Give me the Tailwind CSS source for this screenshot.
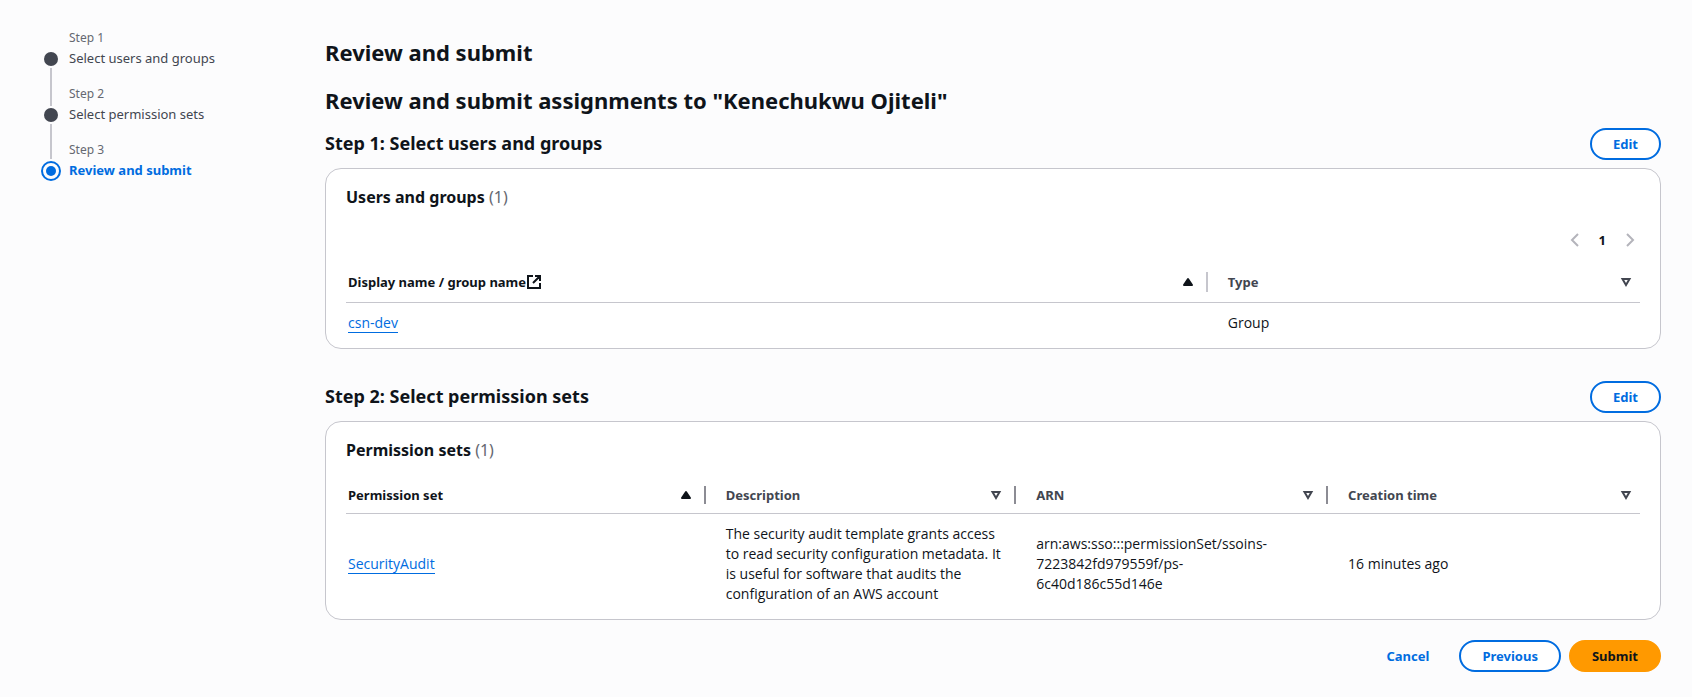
<!DOCTYPE html>
<html lang="en">
<head>
<meta charset="utf-8">
<meta name="viewport" content="width=device-width, initial-scale=1">
<title>Review and submit</title>
<script src="https://cdn.jsdelivr.net/npm/@tailwindcss/browser@4"></script>
</head>
<body class="min-h-screen bg-[#fcfcfd] font-['Noto_Sans',sans-serif] text-[13px] leading-5 text-[#0f141a]">
<svg class="hidden" aria-hidden="true">
  <symbol id="sort-asc" viewBox="0 0 16 16"><path d="M8 5l4 6H4z" fill="currentColor" stroke="currentColor" stroke-width="2" stroke-linejoin="round"/></symbol>
  <symbol id="sort-none" viewBox="0 0 16 16"><path d="M4.5 5h7L8 11z" fill="none" stroke="currentColor" stroke-width="2"/></symbol>
</svg>
<div class="flex pt-7 pr-[31px] pl-10">
  <nav aria-label="Steps" class="w-[285px] shrink-0">
    <ol>
      <li class="flex h-14 gap-2">
        <div class="flex w-[21px] flex-col items-center pt-6"><span class="size-3.5 shrink-0 rounded-full bg-[#424650]"></span><span class="mt-0.5 h-[38px] w-0.5 shrink-0 bg-[#c6c6cd]"></span></div>
        <div><p class="text-[12px] text-[#656871]">Step 1</p><a href="#" class="block text-[#424650]">Select users and groups</a></div>
      </li>
      <li class="flex h-14 gap-2">
        <div class="flex w-[21px] flex-col items-center pt-6"><span class="size-3.5 shrink-0 rounded-full bg-[#424650]"></span><span class="mt-0.5 h-[35px] w-0.5 shrink-0 bg-[#c6c6cd]"></span></div>
        <div><p class="text-[12px] text-[#656871]">Step 2</p><a href="#" class="block text-[#424650]">Select permission sets</a></div>
      </li>
      <li class="flex h-14 gap-2">
        <div class="flex w-[21px] flex-col items-center pt-[21px]"><span class="flex size-5 shrink-0 items-center justify-center rounded-full border-2 border-[#006ce0]"><span class="size-2.5 rounded-full bg-[#006ce0]"></span></span></div>
        <div><p class="text-[12px] text-[#656871]">Step 3</p><a href="#" aria-current="step" class="block font-bold text-[#006ce0]">Review and submit</a></div>
      </li>
    </ol>
  </nav>
  <main class="min-w-0 flex-1 pt-2">
    <h1 class="text-[22px] leading-8 font-bold">Review and submit</h1>
    <h2 class="mt-4 text-[22px] leading-8 font-bold">Review and submit assignments to "Kenechukwu Ojiteli"</h2>
    <section class="mt-3">
      <div class="flex items-start justify-between"><h3 class="text-[18px] leading-[30px] font-bold">Step 1: Select users and groups</h3>
        <button class="h-8 rounded-full border-2 border-[#006ce0] bg-white px-[21px] font-bold text-[#006ce0]">Edit</button></div>
      <div class="mt-2 rounded-2xl border border-[#c6c6cd] bg-white px-5 pt-4 pb-[5px]">
        <h4 class="text-[16px] leading-6 font-bold">Users and groups <span class="font-normal text-[#656871]">(1)</span></h4>
        <div class="mt-[19px] flex h-6 items-center justify-end gap-4 pr-0.5">
          <button aria-label="Previous page" disabled class="text-[#b4b4bb]"><svg class="size-4" viewBox="0 0 16 16" fill="none" stroke="currentColor" stroke-width="2"><path d="M11 2L5 8l6 6"/></svg></button>
          <button aria-current="page" class="font-bold">1</button>
          <button aria-label="Next page" disabled class="text-[#b4b4bb]"><svg class="size-4" viewBox="0 0 16 16" fill="none" stroke="currentColor" stroke-width="2"><path d="M5 2l6 6-6 6"/></svg></button>
        </div>
        <table class="mt-2.5 w-full table-fixed border-collapse text-left">
          <colgroup><col class="w-[66.6%]"><col></colgroup>
          <thead><tr class="h-10 border-b border-[#c6c6cd]">
            <th class="pl-0.5 font-bold"><div class="flex items-center"><span>Display name / group name</span><svg class="size-4" viewBox="0 0 16 16" fill="none" stroke="currentColor" stroke-width="2"><path d="M7 2H2v12h12V9M9 2h5v5M7 9l7-7"/></svg><svg class="mr-2.5 ml-auto size-4"><use href="#sort-asc"/></svg><span class="h-5 w-0.5 bg-[#c6c6cd]"></span></div></th>
            <th class="pl-5 font-bold text-[#424650]"><div class="flex items-center justify-between pr-1.5"><span>Type</span><svg class="size-4"><use href="#sort-none"/></svg></div></th>
          </tr></thead>
          <tbody class="font-['Open_Sans',sans-serif] text-[14px] leading-5"><tr class="h-[41px]"><td class="pl-0.5"><a href="#" class="border-b border-[#006ce0] text-[#006ce0]">csn-dev</a></td><td class="pl-5">Group</td></tr></tbody>
        </table>
      </div>
    </section>
    <section class="mt-8">
      <div class="flex items-start justify-between"><h3 class="text-[18px] leading-[30px] font-bold">Step 2: Select permission sets</h3>
        <button class="h-8 rounded-full border-2 border-[#006ce0] bg-white px-[21px] font-bold text-[#006ce0]">Edit</button></div>
      <div class="mt-2 rounded-2xl border border-[#c6c6cd] bg-white px-5 pt-4 pb-[5px]">
        <h4 class="text-[16px] leading-6 font-bold">Permission sets <span class="font-normal text-[#656871]">(1)</span></h4>
        <table class="mt-4 w-full table-fixed border-collapse text-left">
          <colgroup><col class="w-[27.8%]"><col class="w-[24%]"><col class="w-[24.1%]"><col></colgroup>
          <thead><tr class="h-[35px] border-b border-[#c6c6cd]">
            <th class="pl-0.5 font-bold"><div class="flex items-center"><span>Permission set</span><svg class="mr-2.5 ml-auto size-4"><use href="#sort-asc"/></svg><span class="h-[18px] w-0.5 bg-[#8c8c94]"></span></div></th>
            <th class="pl-5 font-bold text-[#424650]"><div class="flex items-center"><span>Description</span><svg class="mr-2.5 ml-auto size-4"><use href="#sort-none"/></svg><span class="h-[18px] w-0.5 bg-[#8c8c94]"></span></div></th>
            <th class="pl-5 font-bold text-[#424650]"><div class="flex items-center"><span>ARN</span><svg class="mr-2.5 ml-auto size-4"><use href="#sort-none"/></svg><span class="h-[18px] w-0.5 bg-[#8c8c94]"></span></div></th>
            <th class="pl-5 font-bold text-[#424650]"><div class="flex items-center justify-between pr-1.5"><span>Creation time</span><svg class="size-4"><use href="#sort-none"/></svg></div></th>
          </tr></thead>
          <tbody class="font-['Open_Sans',sans-serif] text-[14px] leading-5"><tr><td class="pl-0.5"><a href="#" class="border-b border-[#006ce0] text-[#006ce0]">SecurityAudit</a></td>
            <td class="py-2.5 pr-3 pl-5">The security audit template grants access to read security configuration metadata. It is useful for software that audits the configuration of an AWS account</td>
            <td class="py-2.5 pr-5 pl-5">arn:aws:sso:::permissionSet/ssoins-7223842fd979559f/ps-6c40d186c55d146e</td>
            <td class="pl-5">16 minutes ago</td></tr></tbody>
        </table>
      </div>
    </section>
    <div class="mt-5 flex items-center justify-end gap-2 font-bold text-[#006ce0]">
      <button class="h-8 px-[22px]">Cancel</button>
      <button class="h-8 rounded-full border-2 border-[#006ce0] bg-white px-[21px]">Previous</button>
      <button class="h-8 rounded-full border-2 border-[#ff9900] bg-[#ff9900] px-[21px] text-[#0f141a]">Submit</button>
    </div>
  </main>
</div>
</body>
</html>
